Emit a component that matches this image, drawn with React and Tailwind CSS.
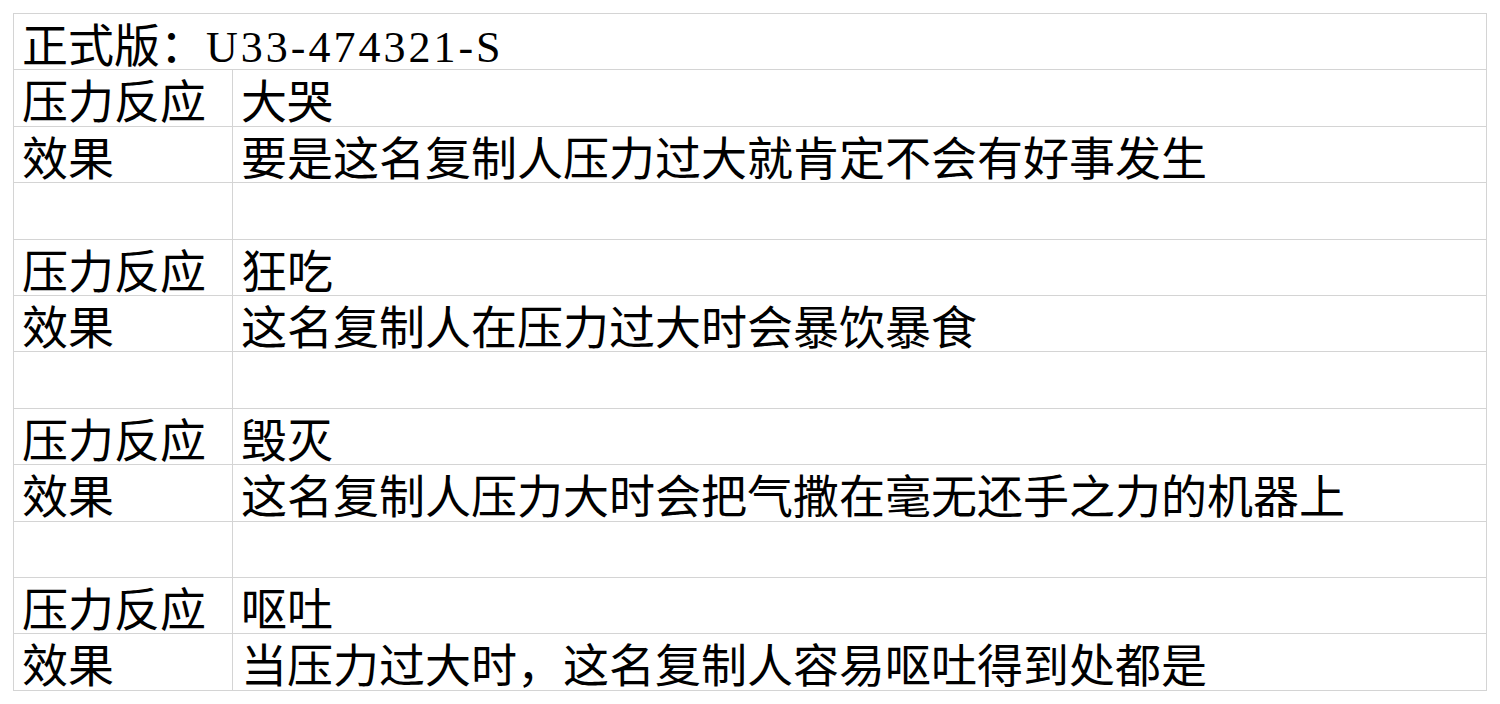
const ROWS = [
  ["压力反应", "大哭"],
  ["效果", "要是这名复制人压力过大就肯定不会有好事发生"],
  ["", ""],
  ["压力反应", "狂吃"],
  ["效果", "这名复制人在压力过大时会暴饮暴食"],
  ["", ""],
  ["压力反应", "毁灭"],
  ["效果", "这名复制人压力大时会把气撒在毫无还手之力的机器上"],
  ["", ""],
  ["压力反应", "呕吐"],
  ["效果", "当压力过大时，这名复制人容易呕吐得到处都是"],
];

const cjk = "font-['Noto_Sans_CJK_SC',sans-serif]";

function Cell({ children, className = "" }) {
  return (
    <div
      className={`h-[56.4px] whitespace-nowrap border-b border-r border-[#d4d4d4] pl-[8px] pt-[5px] text-[46px] leading-[46px] text-black ${cjk} ${className}`}
    >
      {children}
    </div>
  );
}

export default function App() {
  return (
    <div className="min-h-[704px] w-[1500px] bg-white pl-[13px] pt-[13px]">
      <div className="grid w-[1474px] grid-cols-[219px_1fr] border-l border-t border-[#d4d4d4]">
        <Cell className="col-span-2">
          正式版：
          <span className="font-['Liberation_Serif',serif] text-[44px] tracking-[3px]">U33-474321-S</span>
        </Cell>
        {ROWS.map(([label, value], i) => (
          <div key={i} className="contents">
            <Cell>{label}</Cell>
            <Cell className="pl-[7px]">{value}</Cell>
          </div>
        ))}
      </div>
    </div>
  );
}
